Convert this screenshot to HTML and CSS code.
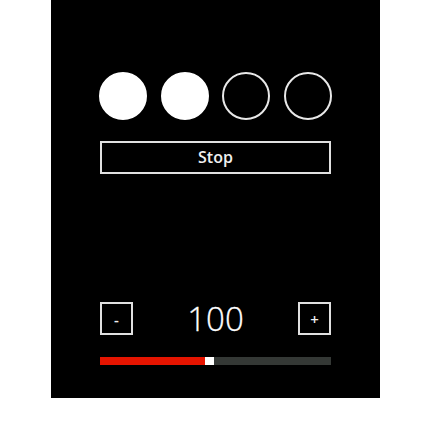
FILE: index.html
```html
<!DOCTYPE html>
<html lang="en">
<head>
    <meta charset="UTF-8">
    <meta name="viewport" content="width=device-width, initial-scale=1.0">
    <title>Metronome</title>
    <link rel="stylesheet" href="styles.css">
</head>
<body>

    <div class="panel">
        <div class="beats">
            <span class="beat on"></span>
            <span class="beat on"></span>
            <span class="beat"></span>
            <span class="beat"></span>
        </div>

        <button class="stop">Stop</button>

        <div class="tempo">
            <button class="step">-</button>
            <span class="value">100</span>
            <button class="step">+</button>
        </div>

        <div class="slider">
            <div class="fill" style="width: 105px"></div>
            <div class="thumb"></div>
            <div class="rest"></div>
        </div>
    </div>

</body>
</html>
```

FILE: styles.css
```css
body {
    margin: 0;
    background-color: #fff;
    font-family: "Open Sans", "Noto Sans", sans-serif;
}
.panel {
    width: 231px;
    height: 326px;
    margin-left: 51px;
    padding: 72px 49px 0 49px;
    background-color: #000;
    color: #f0f0f0;
}
.beats {
    display: flex;
    justify-content: space-between;
    width: 233px;
    margin-left: -1px;
}
.beat {
    width: 44px;
    height: 44px;
    border: 2px solid #e8e8e8;
    border-radius: 50%;
}
.beat.on {
    background-color: #fff;
    border-color: #fff;
}
.stop {
    display: block;
    width: 231px;
    height: 33px;
    margin-top: 21px;
    background: #000;
    border: 2px solid #e0e0e0;
    color: #f0f0f0;
    font-family: "Open Sans", sans-serif;
    font-weight: 600;
    font-size: 16px;
    padding: 0 0 1px 0;
}
.tempo {
    display: flex;
    justify-content: space-between;
    align-items: center;
    margin-top: 128px;
}
.step {
    width: 33px;
    height: 33px;
    background: #000;
    border: 2px solid #e0e0e0;
    color: #f0f0f0;
    font-family: "Open Sans", sans-serif;
    font-size: 15px;
    font-weight: 600;
    padding: 0;
}
.value {
    font-size: 33px;
    font-weight: 300;
    line-height: 33px;
    color: #fff;
    -webkit-text-stroke: 0.3px #fff;
}
.slider {
    display: flex;
    height: 8px;
    margin-top: 22px;
}
.fill {
    background-color: #e51400;
}
.thumb {
    width: 9px;
    background-color: #fff;
}
.rest {
    flex: 1;
    background-color: #343835;
}
```
